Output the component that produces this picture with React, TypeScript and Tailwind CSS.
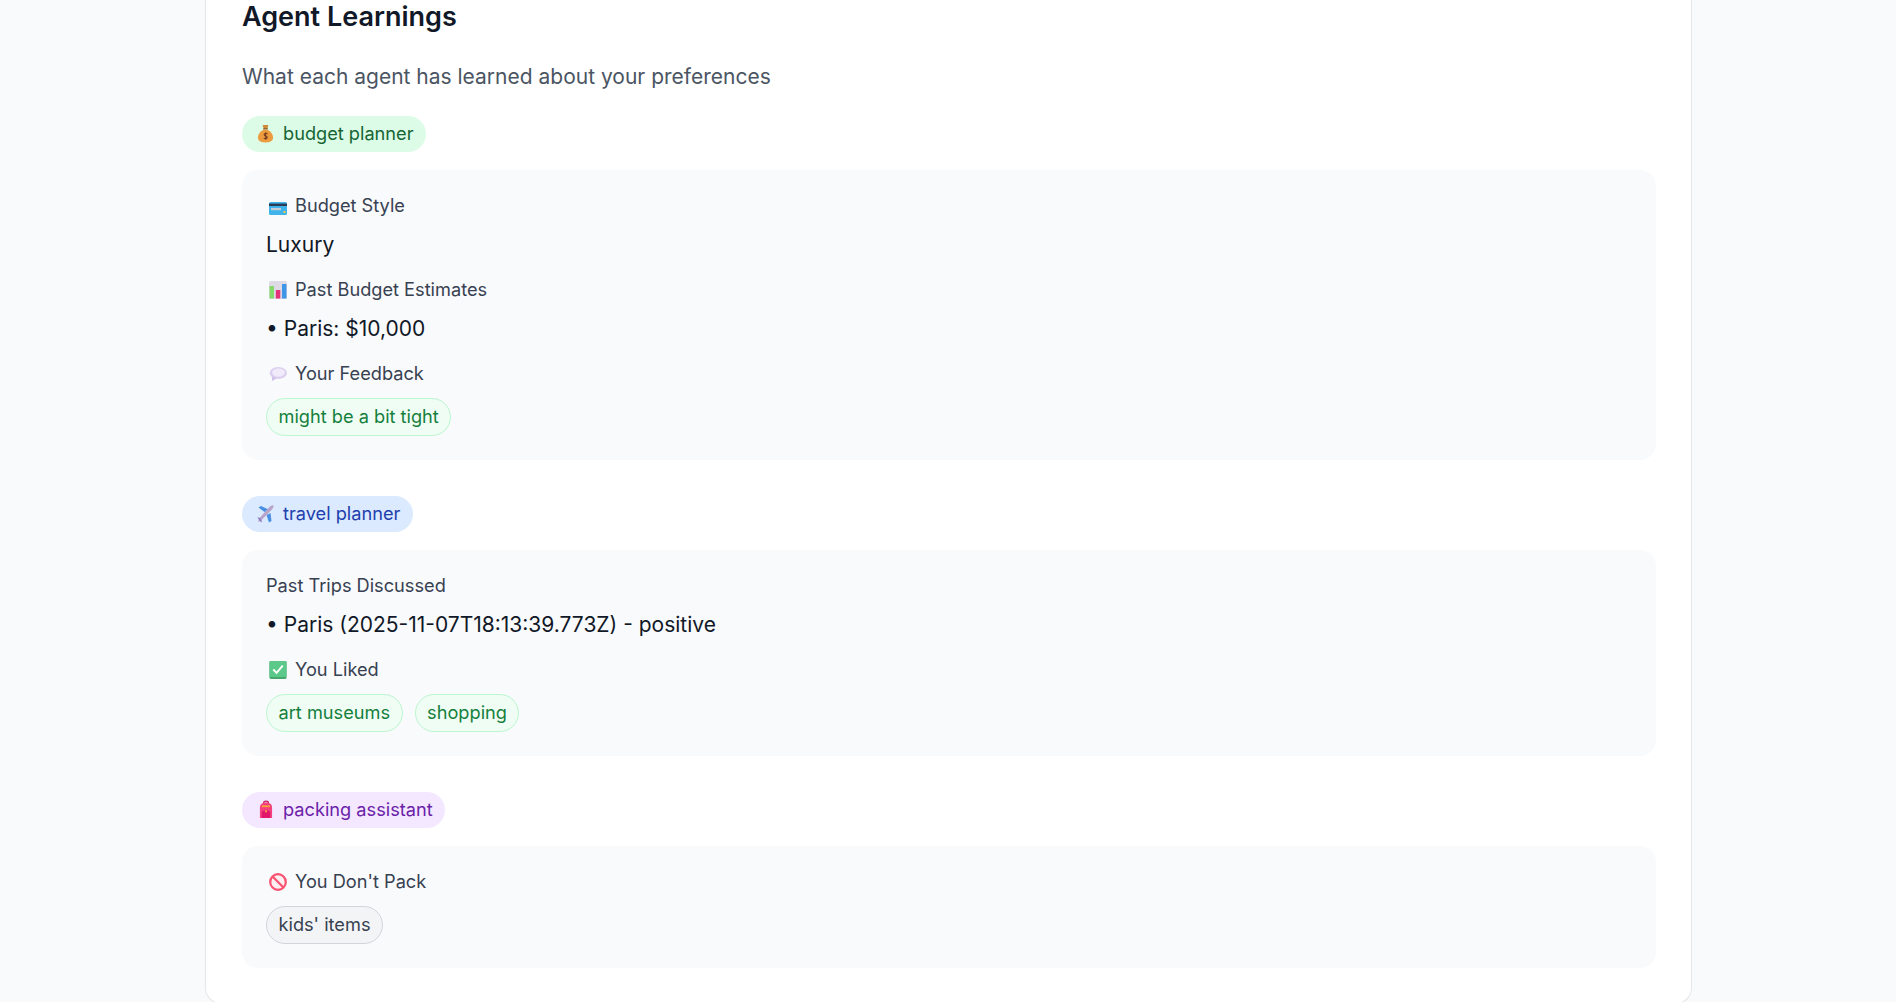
import React from 'react';

const MoneyBag = () => (
  <svg viewBox="0 0 18 20" className="w-[17px] h-[19px] shrink-0">
    <path d="M6 1 L12 1 L11 5 L7 5 Z" fill="#d08a35" />
    <rect x="6.6" y="4.4" width="4.8" height="1.4" fill="#8a5a2b" />
    <path d="M7 6 C3 8 1 11 1 14 C1 18 4 19.5 9 19.5 C14 19.5 17 18 17 14 C17 11 15 8 11 6 Z" fill="#ec9c3f" />
    <path d="M11.2 10.3 C10.2 9.4 7.6 9.6 7.6 11.3 C7.6 13 10.8 12.6 10.8 14.3 C10.8 15.8 8.2 15.8 7.2 14.9 M9.2 8.8 V16.6" fill="none" stroke="#7a3f1d" strokeWidth="1.2" />
  </svg>
);

const CreditCard = () => (
  <svg viewBox="0 0 18 13" className="w-[18px] h-[13px] shrink-0 mt-1">
    <rect x="0" y="0" width="18" height="13" rx="1.5" fill="#40b4ea" />
    <rect x="0" y="1.6" width="18" height="2.4" fill="#2b3a55" />
    <rect x="2" y="6" width="10" height="2.2" fill="#c4ccd8" />
    <rect x="14.5" y="9" width="2" height="2" fill="#f0c93c" />
  </svg>
);

const BarChart = () => (
  <svg viewBox="0 0 18 18" className="w-[18px] h-[18px] shrink-0">
    <rect x="0" y="0" width="18" height="18" rx="1.5" fill="#dedbe6" />
    <rect x="0.5" y="5" width="4.5" height="12.5" fill="#86d96b" />
    <rect x="6.8" y="9" width="4.5" height="8.5" fill="#e5307a" />
    <rect x="13" y="3" width="4.5" height="14.5" fill="#3f95e6" />
  </svg>
);

const SpeechBubble = () => (
  <svg viewBox="0 0 18 14" className="w-[18px] h-[14px] shrink-0">
    <ellipse cx="9.3" cy="6" rx="8.7" ry="6" fill="#dccff0" />
    <ellipse cx="9.5" cy="5.6" rx="6.4" ry="4.2" fill="#f0eafa" />
    <path d="M3 9.5 L3 14 L7.5 11.5 Z" fill="#cfc0ea" />
  </svg>
);

const Airplane = () => (
  <svg viewBox="0 0 18 19" className="w-[19px] h-[19px] shrink-0">
    <path d="M8 8 L2 3.5 L4.5 2 L12 5.5 Z" fill="#4a90e2" />
    <path d="M10 11 L12.5 18.5 L15 17 L14 9 Z" fill="#4a90e2" />
    <path d="M1.5 18 L3 14 L12.5 3.5 C14 2 16.5 1 17 1.5 C17.6 2.2 16 5 14.5 6.5 L5 16 Z" fill="#b8a4c9" />
    <path d="M1 13 L3.5 14 L5 16 L5.5 18.5 L3 17 Z" fill="#8f7cc0" />
  </svg>
);

const CheckBox = () => (
  <svg viewBox="0 0 18 19" className="w-[18px] h-[18px] shrink-0">
    <rect x="0" y="0" width="18" height="19" rx="1.5" fill="#46a86c" />
    <rect x="0" y="0" width="18" height="17" rx="1.5" fill="#5cc98a" />
    <path d="M4 9 L7.5 12.5 L14 5" fill="none" stroke="#ffffff" strokeWidth="2" />
  </svg>
);

const Backpack = () => (
  <svg viewBox="0 0 15 20" className="w-[14px] h-[19px] shrink-0">
    <path d="M5 3 C5 0.5 10 0.5 10 3" fill="none" stroke="#c2185b" strokeWidth="1.4" />
    <path d="M1 8 C1 4 4 2.5 7.5 2.5 C11 2.5 14 4 14 8 V19 H1 Z" fill="#f5407f" />
    <rect x="3" y="5.5" width="9" height="2" fill="#f7a23c" />
    <path d="M3 13 C3 10.5 12 10.5 12 13 V19 H3 Z" fill="#e0176d" />
    <rect x="6.5" y="11" width="2" height="2" fill="#f7a23c" />
  </svg>
);

const NoEntry = () => (
  <svg viewBox="0 0 18 18" className="w-[18px] h-[18px] shrink-0">
    <circle cx="9" cy="9" r="7.8" fill="#fdeef2" stroke="#f9516f" strokeWidth="2.2" />
    <path d="M3.8 3.8 L14.2 14.2" stroke="#f9516f" strokeWidth="2.2" />
  </svg>
);

const Badge = ({ className, icon, label }: { className: string; icon: React.ReactNode; label: string }) => (
  <div className={`inline-flex items-center h-9 pl-[14px] pr-[12.5px] pb-px rounded-full text-[18.2px] leading-none ${className}`}>
    <span className="w-[19px] flex justify-center mr-[8px]">{icon}</span>
    {label}
  </div>
);

const Label = ({ icon, children }: { icon?: React.ReactNode; children: React.ReactNode }) => (
  <div className="flex items-center h-6 text-[18.2px] text-[#374151]">
    {icon && <span className="w-[18px] ml-[3px] mr-[8px] flex justify-center">{icon}</span>}
    {children}
  </div>
);

const Value = ({ children }: { children: React.ReactNode }) => (
  <div className="h-7 mt-[13px] flex items-center text-[21px] text-[#111827]">{children}</div>
);

const Pill = ({ gray, children }: { gray?: boolean; children: React.ReactNode }) => (
  <span
    className={`inline-flex items-center h-[38px] px-[11.5px] rounded-full border text-[18.2px] ${
      gray ? 'bg-[#f3f4f6] border-[#d1d5db] text-[#374151]' : 'bg-[#f0fdf4] border-[#bbf7d0] text-[#15803d]'
    }`}
  >
    {children}
  </span>
);

export default function App() {
  return (
    <div className="h-screen overflow-hidden bg-[#f9fafb] [font-family:Inter,sans-serif]">
      <div className="ml-[205px] w-[1487px] h-[1004px] bg-white border border-t-0 border-[#e5e7eb] rounded-b-2xl pl-[36px] pr-[35px]">
        <h2 className="text-[27px] leading-[34px] font-semibold text-[#111827]">Agent Learnings</h2>
        <p className="mt-[26px] text-[21px] leading-[34px] text-[#4b5563]">What each agent has learned about your preferences</p>

        <div className="mt-[22px]">
          <Badge className="bg-[#dcfce7] text-[#166534]" icon={<MoneyBag />} label="budget planner" />
          <div className="mt-[18px] h-[290px] bg-[#f9fafb] rounded-2xl px-6 pt-6">
            <Label icon={<CreditCard />}>Budget Style</Label>
            <Value>Luxury</Value>
            <div className="mt-[19px]"><Label icon={<BarChart />}>Past Budget Estimates</Label></div>
            <Value>• Paris: $10,000</Value>
            <div className="mt-[19px]"><Label icon={<SpeechBubble />}>Your Feedback</Label></div>
            <div className="mt-3 flex gap-3"><Pill>might be a bit tight</Pill></div>
          </div>
        </div>

        <div className="mt-[36px]">
          <Badge className="bg-[#dbeafe] text-[#1e40af]" icon={<Airplane />} label="travel planner" />
          <div className="mt-[18px] h-[206px] bg-[#f9fafb] rounded-2xl px-6 pt-6">
            <Label>Past Trips Discussed</Label>
            <Value>• Paris (2025-11-07T18:13:39.773Z) - positive</Value>
            <div className="mt-[19px]"><Label icon={<CheckBox />}>You Liked</Label></div>
            <div className="mt-3 flex gap-3"><Pill>art museums</Pill><Pill>shopping</Pill></div>
          </div>
        </div>

        <div className="mt-[36px]">
          <Badge className="bg-[#f3e8ff] text-[#6b21a8]" icon={<Backpack />} label="packing assistant" />
          <div className="mt-[18px] h-[122px] bg-[#f9fafb] rounded-2xl px-6 pt-6">
            <Label icon={<NoEntry />}>You Don't Pack</Label>
            <div className="mt-3 flex gap-3"><Pill gray>kids' items</Pill></div>
          </div>
        </div>
      </div>
    </div>
  );
}
